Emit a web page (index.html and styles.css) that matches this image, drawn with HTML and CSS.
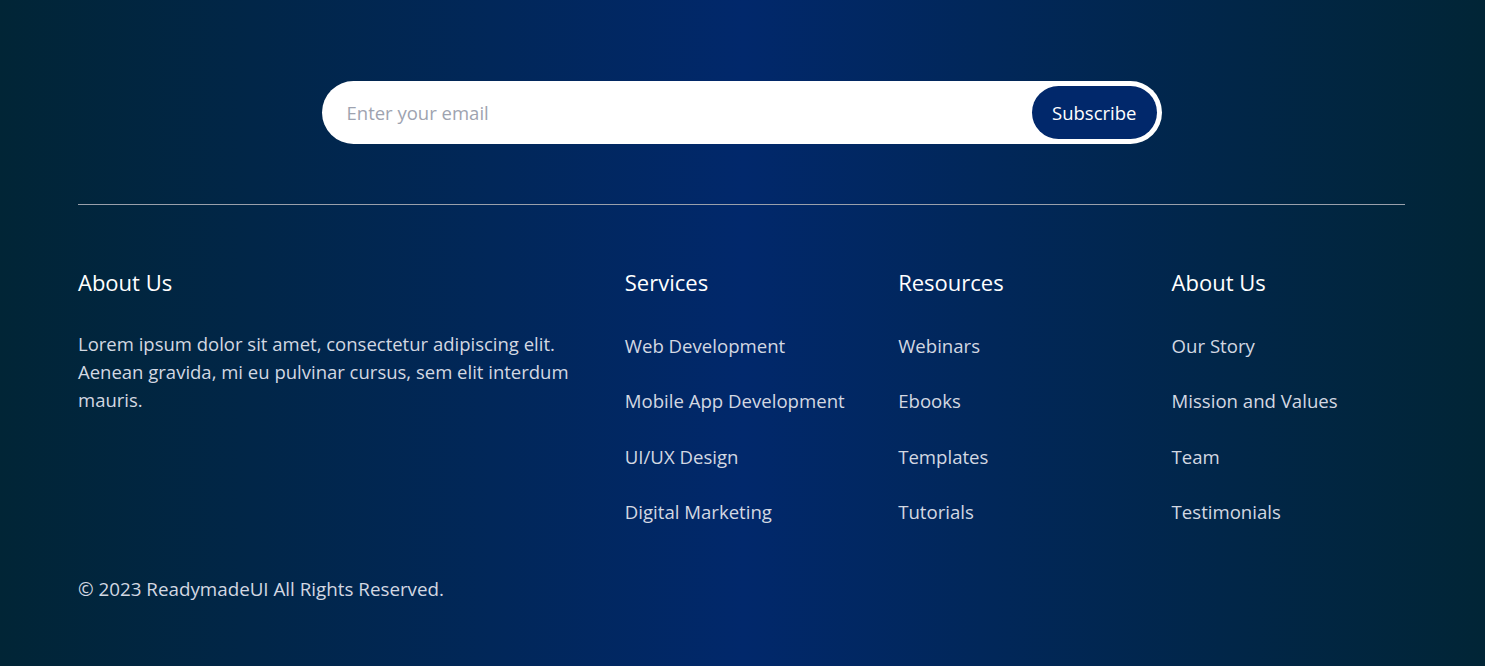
FILE: index.html
```html
<!DOCTYPE html>
<html lang="en">
<head>
<meta charset="utf-8">
<title>Footer</title>
<link rel="stylesheet" href="styles.css">
</head>
<body>
<footer class="footer">
  <div class="container">
    <form class="subscribe" onsubmit="return false">
      <input class="subscribe-input" type="email" placeholder="Enter your email">
      <button class="subscribe-btn" type="submit">Subscribe</button>
    </form>
    <hr class="divider">
    <div class="columns">
      <div class="col col-about">
        <h3 class="col-title">About Us</h3>
        <p class="about-text">Lorem ipsum dolor sit amet, consectetur adipiscing elit. Aenean gravida, mi eu pulvinar cursus, sem elit interdum mauris.</p>
      </div>
      <div class="col">
        <h3 class="col-title">Services</h3>
        <ul class="links">
          <li><a href="#">Web Development</a></li>
          <li><a href="#">Mobile App Development</a></li>
          <li><a href="#">UI/UX Design</a></li>
          <li><a href="#">Digital Marketing</a></li>
        </ul>
      </div>
      <div class="col">
        <h3 class="col-title">Resources</h3>
        <ul class="links">
          <li><a href="#">Webinars</a></li>
          <li><a href="#">Ebooks</a></li>
          <li><a href="#">Templates</a></li>
          <li><a href="#">Tutorials</a></li>
        </ul>
      </div>
      <div class="col">
        <h3 class="col-title">About Us</h3>
        <ul class="links">
          <li><a href="#">Our Story</a></li>
          <li><a href="#">Mission and Values</a></li>
          <li><a href="#">Team</a></li>
          <li><a href="#">Testimonials</a></li>
        </ul>
      </div>
    </div>
    <p class="copyright">© 2023 ReadymadeUI All Rights Reserved.</p>
  </div>
</footer>
</body>
</html>
```
FILE: styles.css
```css
* { box-sizing: border-box; }
html, body { margin: 0; padding: 0; }
body {
  font-family: "Open Sans", "Noto Sans", "Liberation Sans", sans-serif;
  background: #012536;
}
.footer {
  background: linear-gradient(90deg, #012536 0%, #01286b 50%, #012536 100%);
  padding: 81px 80px 58px 78px;
  min-height: 666px;
}
.subscribe {
  display: flex;
  align-items: center;
  width: 840px;
  height: 63px;
  margin: 0 auto;
  padding: 5px;
  background: #fff;
  border-radius: 999px;
}
.subscribe-input {
  flex: 1;
  min-width: 0;
  height: 100%;
  border: none;
  outline: none;
  background: transparent;
  padding: 0 20px;
  font-family: inherit;
  font-size: 18.5px;
  color: #333;
}
.subscribe-input::placeholder { color: #9ea3b0; }
.subscribe-btn {
  height: 53px;
  padding: 0 20px;
  border: none;
  border-radius: 999px;
  background: #01286b;
  color: #fff;
  font-family: inherit;
  font-size: 18.5px;
  cursor: pointer;
}
.divider {
  border: none;
  border-top: 1px solid #9aa0ab;
  margin: 60px 0 0;
}
.columns {
  display: grid;
  grid-template-columns: repeat(5, 1fr);
  column-gap: 40px;
  margin-top: 59px;
}
.col-about { grid-column: span 2; }
.col-title {
  margin: 0;
  font-size: 22px;
  line-height: 36px;
  font-weight: 400;
  color: #fff;
}
.about-text {
  margin: 30px 0 0;
  font-size: 18.5px;
  line-height: 28px;
  color: #d3d8e2;
}
.links {
  list-style: none;
  margin: 32px 0 0;
  padding: 0;
  display: flex;
  flex-direction: column;
  gap: 28px;
}
.links li {
  font-size: 18.6px;
  line-height: 27.3px;
}
.links a {
  color: #d3d8e2;
  text-decoration: none;
}
.copyright {
  margin: 51px 0 0;
  font-size: 18.8px;
  line-height: 27px;
  color: #d3d8e2;
}
```
